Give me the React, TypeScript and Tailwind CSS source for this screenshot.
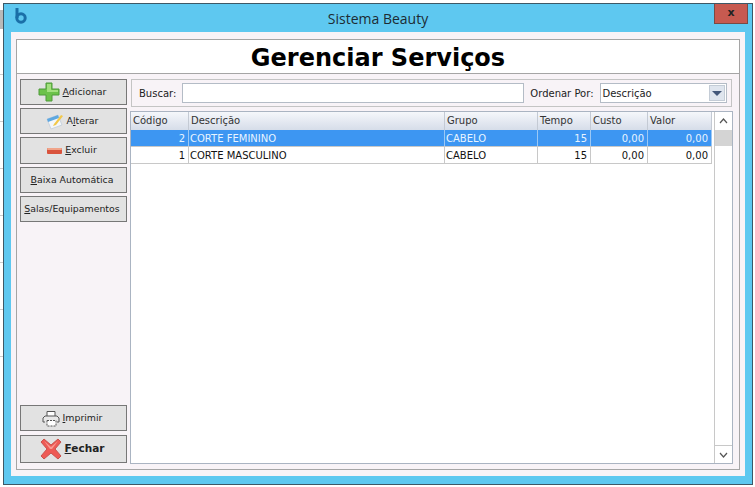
import React from 'react'

const ui = "[font-family:'DejaVu_Sans',sans-serif]"

const PlusIcon = () => (
  <svg width="22" height="20" viewBox="0 0 22 20" className="shrink-0">
    <path d="M8 1h6v6h7v6h-7v6H8v-6H1V7h7z" fill="#6cc24a" stroke="#4f9a3a" strokeWidth="1" />
    <path d="M9 2h4v6h7v2H9z" fill="#a3e07f" />
  </svg>
)

const NoteIcon = () => (
  <svg width="18" height="17" viewBox="0 0 18 17" className="shrink-0">
    <path d="M1 6l11-4 4 10-11 4z" fill="#f4f7fb" stroke="#c9d3df" />
    <path d="M1 6l11-4 1 3-11 4z" fill="#5fa8e0" />
    <path d="M8 11l7-9 2 1-7 9-3 1z" fill="#f2c84a" />
  </svg>
)

const MinusIcon = () => (
  <svg width="15" height="6" viewBox="0 0 15 6" className="shrink-0">
    <rect x="0" y="0" width="15" height="6" rx="1" fill="#d9533c" />
    <rect x="0" y="0" width="15" height="2" rx="1" fill="#f0a48a" />
  </svg>
)

const PrinterIcon = () => (
  <svg width="18" height="17" viewBox="0 0 18 17" fill="none" stroke="#555" strokeWidth="1" className="shrink-0">
    <path d="M5 6V1.5h8V6" fill="#fff" />
    <path d="M3 12H1V8l2-2h12l2 2v4h-2" fill="#e8e8e8" />
    <path d="M5 10.5h9v5.5H5z" fill="#fff" strokeDasharray="2 1" />
  </svg>
)

const CloseIcon = () => (
  <svg width="22" height="22" viewBox="0 0 22 22" className="shrink-0">
    <path d="M4 1l7 6 7-6 3 3-6 7 6 7-3 3-7-6-7 6-3-3 6-7-6-7z" fill="#ee5a55" stroke="#c8534e" strokeWidth="1" strokeLinejoin="round" />
    <path d="M4 3l7 6 7-6-6 8h-2z" fill="#f89a92" />
  </svg>
)

const Chevron = ({ up }: { up?: boolean }) => (
  <svg width="9" height="6" viewBox="0 0 9 6" fill="none" stroke="#555" strokeWidth="1.2">
    <path d={up ? 'M1 5l3.5-4L8 5' : 'M1 1l3.5 4L8 1'} />
  </svg>
)

const SideButton = ({
  label,
  mnemonic,
  rest,
  icon,
  className,
}: {
  label?: string
  mnemonic: string
  rest: string
  icon?: React.ReactNode
  className: string
}) => (
  <button className={`flex w-[107px] shrink-0 items-center justify-center gap-[3px] border border-[#777] bg-[#e2e2e2] pr-[3px] text-[#222] ${className}`}>
    {icon}
    <span>
      {label}
      <span className="underline">{mnemonic}</span>
      {rest}
    </span>
  </button>
)

const columns = [
  { name: 'Código', width: 'w-[58px]' },
  { name: 'Descrição', width: 'w-[256px]' },
  { name: 'Grupo', width: 'w-[93px]' },
  { name: 'Tempo', width: 'w-[53px]' },
  { name: 'Custo', width: 'w-[57px]' },
  { name: 'Valor', width: 'w-[64px]' },
]

const rows = [
  { codigo: '2', descricao: 'CORTE FEMININO', grupo: 'CABELO', tempo: '15', custo: '0,00', valor: '0,00', selected: true },
  { codigo: '1', descricao: 'CORTE MASCULINO', grupo: 'CABELO', tempo: '15', custo: '0,00', valor: '0,00', selected: false },
]

const Cell = ({ width, right, selected, children }: { width: string; right?: boolean; selected: boolean; children: React.ReactNode }) => (
  <div className={`flex h-full shrink-0 items-center border-r pl-[1px] ${width} ${right ? 'justify-end pr-[3px]' : ''} ${selected ? 'border-[#9cc8f5]' : 'border-[#c8c8c8]'}`}>
    {children}
  </div>
)

export default function App() {
  return (
    <div className={`flex h-[487px] w-[755px] overflow-hidden bg-white ${ui}`}>
      <div className="flex w-[3px] shrink-0 flex-col">
        <div className="h-[10px]" />
        <div className="h-[19px] bg-[#b9b9b9]" />
        <div className="h-[46px] border-b border-[#ccc]" />
        <div className="h-[47px] border-b border-[#ccc]" />
        <div className="h-[47px] border-b border-[#ccc]" />
        <div className="h-[47px] border-b border-[#ccc]" />
        <div className="h-[47px] border-b border-[#ccc]" />
        <div className="h-[47px] border-b border-[#ccc]" />
        <div className="h-[47px] border-b border-[#ccc]" />
      </div>

      <div className="mt-[3px] flex h-[482px] w-[750px] shrink-0 flex-col border border-[#3d5866] bg-[#5ec8f0]">
        <div className="flex h-[28px] shrink-0 items-start justify-between">
          <svg width="14" height="16" viewBox="0 0 14 16" className="ml-[10px] mt-[4px]" fill="none" stroke="#1a6fa8" strokeWidth="3">
            <path d="M3 0v10" />
            <circle cx="7" cy="10" r="4.2" />
          </svg>
          <div className="ml-[14px] mt-[4px] text-[14px] text-[#1d2b33] [font-family:'Open_Sans',sans-serif]">Sistema Beauty</div>
          <button className="mr-[4px] flex h-[20px] w-[34px] items-center justify-center border border-[#7a4a44] border-t-0 bg-[#c75a50] text-[11px] font-bold text-[#222]">
            x
          </button>
        </div>

        <div className="ml-[7px] flex h-[444px] w-[734px] shrink-0 flex-col bg-[#f8f3f7] pl-[5px] pr-[5px] pt-[7px]">
          <div className="flex h-[431px] w-[724px] flex-col border border-[#a5a5a5]">
            <div className="flex h-[34px] shrink-0 items-center justify-center border-b border-[#a5a5a5] bg-white pt-[2px] text-[24px] font-bold text-black">
              Gerenciar Serviços
            </div>

            <div className="flex min-h-0 flex-1 pl-[3px] pt-[5px]">
              <div className="flex h-[384px] w-[110px] shrink-0 flex-col text-[9.4px]">
                <SideButton mnemonic="A" rest="dicionar" icon={<PlusIcon />} className="h-[26px]" />
                <SideButton label="A" mnemonic="l" rest="terar" icon={<NoteIcon />} className="mt-[3px] h-[26px]" />
                <SideButton mnemonic="E" rest="xcluir" icon={<MinusIcon />} className="mt-[3px] h-[27px]" />
                <SideButton mnemonic="B" rest="aixa Automática" className="mt-[3px] h-[26px]" />
                <SideButton mnemonic="S" rest="alas/Equipamentos" className="mt-[3px] h-[26px]" />
                <SideButton mnemonic="I" rest="mprimir" icon={<PrinterIcon />} className="mt-auto h-[26px]" />
                <SideButton
                  mnemonic="F"
                  rest="echar"
                  icon={<CloseIcon />}
                  className="mt-[4px] h-[28px] text-[10.5px] font-bold"
                />
              </div>

              <div className="flex h-[385px] w-[603px] shrink-0 flex-col">
                <div className="ml-[1px] flex h-[28px] w-[601px] shrink-0 items-center border border-[#c4c4c4] text-[10px] text-[#222]">
                  <span className="ml-[7px]">Buscar:</span>
                  <div className="ml-[6px] h-[20px] w-[342px] border border-[#b4bcc6] bg-white" />
                  <span className="ml-[6px]">Ordenar Por:</span>
                  <div className="ml-[6px] flex h-[20px] w-[127px] items-center justify-between border border-[#b4bcc6] bg-white pl-[2px] pr-[1px]">
                    <span>Descrição</span>
                    <div className="flex h-[16px] w-[16px] items-center justify-center border border-[#c4ccd6] bg-[#dfe5ee]">
                      <div className="h-0 w-0 border-x-[5px] border-t-[5px] border-x-transparent border-t-[#44587a]" />
                    </div>
                  </div>
                </div>

                <div className="mt-[4px] flex min-h-0 flex-1 border border-[#aab4c2] bg-white text-[10px]">
                  <div className="flex w-[581px] shrink-0 flex-col">
                    <div className="flex h-[18px] shrink-0 bg-gradient-to-b from-[#f5f7fb] to-[#d6dde9] text-[#333]">
                      {columns.map((col) => (
                        <div key={col.name} className={`flex h-full shrink-0 items-center border-r border-[#c4cad4] px-[2px] pb-[2px] ${col.width}`}>
                          {col.name}
                        </div>
                      ))}
                    </div>
                    {rows.map((row) => (
                      <div
                        key={row.codigo}
                        className={`flex h-[17px] shrink-0 border-b border-[#c8c8c8] ${row.selected ? 'bg-[#3d96f2] text-[#e8f4ff]' : 'bg-white text-[#111]'}`}
                      >
                        <Cell width="w-[58px]" right selected={row.selected}>{row.codigo}</Cell>
                        <Cell width="w-[256px]" selected={row.selected}>{row.descricao}</Cell>
                        <Cell width="w-[93px]" selected={row.selected}>{row.grupo}</Cell>
                        <Cell width="w-[53px]" right selected={row.selected}>{row.tempo}</Cell>
                        <Cell width="w-[57px]" right selected={row.selected}>{row.custo}</Cell>
                        <Cell width="w-[64px]" right selected={row.selected}>{row.valor}</Cell>
                      </div>
                    ))}
                  </div>

                  <div className="ml-auto flex w-[18px] shrink-0 flex-col border-l border-[#c8c8c8] bg-white">
                    <div className="flex h-[18px] items-center justify-center">
                      <Chevron up />
                    </div>
                    <div className="h-[16px] bg-[#d4d4d4]" />
                    <div className="flex-1" />
                    <div className="flex h-[18px] items-center justify-center border-t border-[#c8c8c8]">
                      <Chevron />
                    </div>
                  </div>
                </div>
              </div>
            </div>
          </div>
        </div>
      </div>
    </div>
  )
}
